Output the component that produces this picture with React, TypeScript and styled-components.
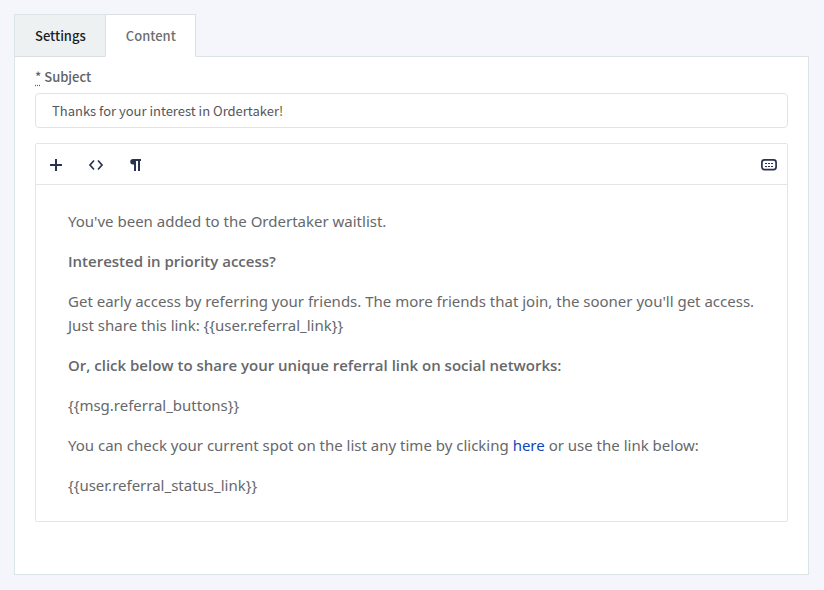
import React, { useState } from "react";
import styled, { createGlobalStyle } from "styled-components";

const GlobalStyle = createGlobalStyle`
  *, *::before, *::after { box-sizing: border-box; }
  body {
    margin: 0;
    background: #f5f6fb;
    color: #5f6266;
    font: 13px/20px "Noto Sans CJK SC", "Noto Sans", sans-serif;
  }
`;

const Page = styled.main`
  padding: 14px 15px 15px 14px;
`;

const TabList = styled.div`
  display: flex;
  margin-bottom: -1px;
`;

const Tab = styled.button<{ $active: boolean }>`
  height: 43px;
  padding: 0 19px 0 20px;
  border: 1px solid ${(p) => (p.$active ? "#dadfe1" : "#dce4e8")};
  border-bottom-color: ${(p) => (p.$active ? "#fff" : "#dadfe1")};
  background: ${(p) => (p.$active ? "#fff" : "#edf1f2")};
  color: ${(p) => (p.$active ? "#6c6e72" : "#1b1d28")};
  font: inherit;
  font-weight: 500;
  cursor: pointer;

  & + & {
    margin-left: -1px;
  }
`;

const Panel = styled.section`
  padding: 10px 20px 52px;
  border: 1px solid #dce4e8;
  background: #fff;
`;

const Field = styled.div`
  display: flex;
  flex-direction: column;
  gap: 6px;
  margin-bottom: 15px;
`;

const Label = styled.label`
  font-weight: 500;

  abbr {
    text-decoration: underline dotted;
    text-underline-offset: 3px;
  }
`;

const TextInput = styled.input`
  width: 100%;
  height: 35px;
  padding: 0 16px;
  border: 1px solid #e0e4e6;
  border-radius: 4px;
  background: #fff;
  color: #53565c;
  font: inherit;
`;

const Editor = styled.div`
  border: 1px solid #e3e5e7;
  border-radius: 2px;
`;

const Toolbar = styled.div`
  display: flex;
  height: 41px;
  border-bottom: 1px solid #e3e5e7;
`;

const ToolButton = styled.button<{ $end?: boolean }>`
  display: grid;
  place-items: center;
  width: 40px;
  padding: 2px 0 0;
  margin-left: ${(p) => (p.$end ? "auto" : "0")};
  margin-right: ${(p) => (p.$end ? "-2px" : "0")};
  border: 0;
  background: none;
  color: #29324e;
  cursor: pointer;
`;

const Document = styled.div`
  padding: 24px 32px;
  color: #66686b;
  font: 15px/24px "Noto Sans", "Open Sans", sans-serif;
  outline: none;

  p { margin: 0 0 16px; }
  p:last-child { margin-bottom: 0; }
  strong { font-family: "Open Sans", "Noto Sans", sans-serif; font-weight: 600; }
  a { color: #1047b5; text-decoration: none; }
`;

const PlusIcon = () => (
  <svg width="16" height="16" viewBox="0 0 16 16" aria-hidden="true">
    <path d="M8 2v12M2 8h12" stroke="currentColor" strokeWidth="2" fill="none" />
  </svg>
);

const CodeIcon = () => (
  <svg width="16" height="16" viewBox="0 0 16 16" aria-hidden="true">
    <path d="M6 3.500 2 8l4 4.500M10 3.500 14 8l-4 4.500" stroke="currentColor" strokeWidth="1.7" fill="none" />
  </svg>
);

const ParagraphIcon = () => (
  <svg width="16" height="16" viewBox="0 0 16 16" aria-hidden="true">
    <path
      d="M5 2H13V4H12V14H10V4H8V14H6V7.500H5A2.750 2.750 0 0 1 5 2Z"
      fill="currentColor"
    />
  </svg>
);

const KeyboardIcon = () => (
  <svg width="16" height="16" viewBox="0 0 16 16" aria-hidden="true">
    <rect x="0.900" y="2.900" width="14.200" height="9.800" rx="2.600" stroke="currentColor" strokeWidth="1.700" fill="none" />
    <path d="M4 6.500h2M7 6.500h2M10 6.500h2M4 9.500h2M7 9.500h2M10 9.500h2" stroke="currentColor" strokeWidth="1.200" />
  </svg>
);

const tabs = ["Settings", "Content"];

export default function App() {
  const [active, setActive] = useState("Content");
  const [subject, setSubject] = useState("Thanks for your interest in Ordertaker!");

  return (
    <>
      <GlobalStyle />
      <Page>
        <TabList role="tablist">
          {tabs.map((name) => (
            <Tab
              key={name}
              type="button"
              role="tab"
              aria-selected={active === name}
              $active={active === name}
              onClick={() => setActive(name)}
            >
              {name}
            </Tab>
          ))}
        </TabList>
        <Panel role="tabpanel">
          <Field>
            <Label htmlFor="subject">
              <abbr title="required">*</abbr> Subject
            </Label>
            <TextInput id="subject" value={subject} onChange={(e) => setSubject(e.target.value)} />
          </Field>
          <Editor>
            <Toolbar role="toolbar" aria-label="Formatting">
              <ToolButton type="button" aria-label="Add"><PlusIcon /></ToolButton>
              <ToolButton type="button" aria-label="HTML"><CodeIcon /></ToolButton>
              <ToolButton type="button" aria-label="Format"><ParagraphIcon /></ToolButton>
              <ToolButton type="button" aria-label="Hotkeys" $end><KeyboardIcon /></ToolButton>
            </Toolbar>
            <Document contentEditable suppressContentEditableWarning spellCheck={false}>
              <p>You've been added to the Ordertaker waitlist.</p>
              <p><strong>Interested in priority access?</strong></p>
              <p>
                Get early access by referring your friends. The more friends that join, the sooner you'll get access.
                <br />
                {"Just share this link: {{user.referral_link}}"}
              </p>
              <p><strong>Or, click below to share your unique referral link on social networks:</strong></p>
              <p>{"{{msg.referral_buttons}}"}</p>
              <p>
                You can check your current spot on the list any time by clicking <a href="#status">here</a> or use the
                link below:
              </p>
              <p>{"{{user.referral_status_link}}"}</p>
            </Document>
          </Editor>
        </Panel>
      </Page>
    </>
  );
}
